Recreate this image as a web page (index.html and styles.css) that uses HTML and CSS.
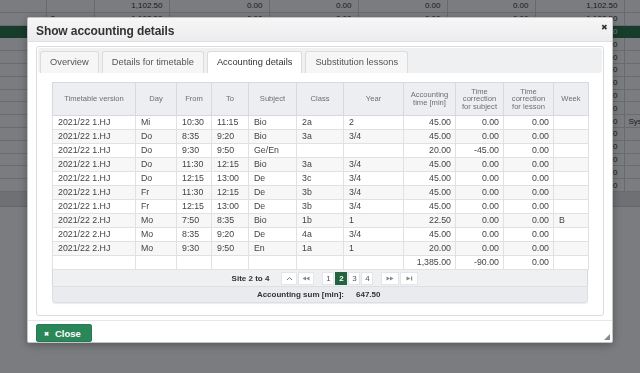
FILE: index.html
```html
<!DOCTYPE html>
<html lang="en">
<head>
    <meta charset="UTF-8">
    <meta name="viewport" content="width=device-width, initial-scale=1.0">
    <title>Show accounting details</title>
    <link rel="stylesheet" href="styles.css">
</head>
<body>

    <!-- page behind the dialog -->
    <div class="page">
        <table class="bg-table">
            <colgroup>
                <col style="width:46px"><col style="width:48px"><col style="width:75px"><col style="width:100px"><col style="width:89px">
                <col style="width:89px"><col style="width:88px"><col style="width:89px"><col style="width:16px">
            </colgroup>
            <tr><td></td><td></td><td>1,102.50</td><td>0.00</td><td>0.00</td><td>0.00</td><td>0.00</td><td>1,102.50</td><td></td></tr>
            <tr><td></td><td class="l">2</td><td>1,102.50</td><td>0.00</td><td>0.00</td><td>0.00</td><td>0.00</td><td>1,102.50</td><td></td></tr>
            <tr class="sel"><td></td><td></td><td></td><td></td><td></td><td></td><td></td><td>1,102.50</td><td></td></tr>
            <tr><td></td><td></td><td></td><td></td><td></td><td></td><td></td><td>1,102.50</td><td></td></tr>
            <tr><td></td><td></td><td></td><td></td><td></td><td></td><td></td><td>1,102.50</td><td></td></tr>
            <tr><td></td><td></td><td></td><td></td><td></td><td></td><td></td><td>1,102.50</td><td></td></tr>
            <tr><td></td><td></td><td></td><td></td><td></td><td></td><td></td><td>1,102.50</td><td></td></tr>
            <tr><td></td><td></td><td></td><td></td><td></td><td></td><td></td><td>1,102.50</td><td></td></tr>
            <tr><td></td><td></td><td></td><td></td><td></td><td></td><td></td><td>1,102.50</td><td></td></tr>
            <tr><td></td><td></td><td></td><td></td><td></td><td></td><td></td><td>1,102.50</td><td class="l">Sys</td></tr>
            <tr><td></td><td></td><td></td><td></td><td></td><td></td><td></td><td>1,102.50</td><td></td></tr>
            <tr><td></td><td></td><td></td><td></td><td></td><td></td><td></td><td>1,102.50</td><td></td></tr>
            <tr><td></td><td></td><td></td><td></td><td></td><td></td><td></td><td>1,102.50</td><td></td></tr>
            <tr><td></td><td></td><td></td><td></td><td></td><td></td><td></td><td>1,102.50</td><td></td></tr>
            <tr><td></td><td></td><td></td><td></td><td></td><td></td><td></td><td>1,102.50</td><td></td></tr>
        </table>
        <div class="bg-footer"></div>
    </div>

    <div class="overlay"></div>

    <div class="modal">
        <div class="modal-head">
            <h2>Show accounting details</h2>
            <span class="modal-x">&#10006;</span>
        </div>

        <div class="modal-body">
            <div class="tabs">
                <ul class="tab-bar">
                    <li>Overview</li>
                    <li>Details for timetable</li>
                    <li class="active">Accounting details</li>
                    <li>Substitution lessons</li>
                </ul>

                <div class="tab-panel">
                    <div class="grid-wrap">
                        <table class="grid">
                            <colgroup>
                                <col style="width:83px"><col style="width:41px"><col style="width:35px"><col style="width:37px">
                                <col style="width:48px"><col style="width:47px"><col style="width:60px"><col style="width:52px">
                                <col style="width:48px"><col style="width:50px"><col style="width:35px">
                            </colgroup>
                            <thead>
                                <tr>
                                    <th>Timetable version</th><th>Day</th><th>From</th><th>To</th><th>Subject</th><th>Class</th><th>Year</th>
                                    <th>Accounting<br>time [min]</th><th>Time<br>correction<br>for subject</th><th>Time<br>correction<br>for lesson</th><th>Week</th>
                                </tr>
                            </thead>
                            <tbody>
                                <tr><td>2021/22 1.HJ</td><td>Mi</td><td>10:30</td><td>11:15</td><td>Bio</td><td>2a</td><td>2</td><td class="num">45.00</td><td class="num">0.00</td><td class="num">0.00</td><td></td></tr>
                                <tr><td>2021/22 1.HJ</td><td>Do</td><td>8:35</td><td>9:20</td><td>Bio</td><td>3a</td><td>3/4</td><td class="num">45.00</td><td class="num">0.00</td><td class="num">0.00</td><td></td></tr>
                                <tr><td>2021/22 1.HJ</td><td>Do</td><td>9:30</td><td>9:50</td><td>Ge/En</td><td></td><td></td><td class="num">20.00</td><td class="num">-45.00</td><td class="num">0.00</td><td></td></tr>
                                <tr><td>2021/22 1.HJ</td><td>Do</td><td>11:30</td><td>12:15</td><td>Bio</td><td>3a</td><td>3/4</td><td class="num">45.00</td><td class="num">0.00</td><td class="num">0.00</td><td></td></tr>
                                <tr><td>2021/22 1.HJ</td><td>Do</td><td>12:15</td><td>13:00</td><td>De</td><td>3c</td><td>3/4</td><td class="num">45.00</td><td class="num">0.00</td><td class="num">0.00</td><td></td></tr>
                                <tr><td>2021/22 1.HJ</td><td>Fr</td><td>11:30</td><td>12:15</td><td>De</td><td>3b</td><td>3/4</td><td class="num">45.00</td><td class="num">0.00</td><td class="num">0.00</td><td></td></tr>
                                <tr><td>2021/22 1.HJ</td><td>Fr</td><td>12:15</td><td>13:00</td><td>De</td><td>3b</td><td>3/4</td><td class="num">45.00</td><td class="num">0.00</td><td class="num">0.00</td><td></td></tr>
                                <tr><td>2021/22 2.HJ</td><td>Mo</td><td>7:50</td><td>8:35</td><td>Bio</td><td>1b</td><td>1</td><td class="num">22.50</td><td class="num">0.00</td><td class="num">0.00</td><td>B</td></tr>
                                <tr><td>2021/22 2.HJ</td><td>Mo</td><td>8:35</td><td>9:20</td><td>De</td><td>4a</td><td>3/4</td><td class="num">45.00</td><td class="num">0.00</td><td class="num">0.00</td><td></td></tr>
                                <tr><td>2021/22 2.HJ</td><td>Mo</td><td>9:30</td><td>9:50</td><td>En</td><td>1a</td><td>1</td><td class="num">20.00</td><td class="num">0.00</td><td class="num">0.00</td><td></td></tr>
                                <tr><td></td><td></td><td></td><td></td><td></td><td></td><td></td><td class="num">1,385.00</td><td class="num">-90.00</td><td class="num">0.00</td><td></td></tr>
                            </tbody>
                        </table>

                        <div class="pager">
                            <span class="pager-info">Site 2 to 4</span>
                            <div class="pg-group">
                                <span class="pg"><svg width="7" height="5" viewBox="0 0 7 5"><polyline points="1,4 3.5,1.5 6,4" fill="none" stroke="#777" stroke-width="1"/></svg></span>
                                <span class="pg"><svg width="8" height="5" viewBox="0 0 8 5"><path d="M4 0.5 L0.5 2.5 L4 4.5 Z M7.5 0.5 L4 2.5 L7.5 4.5 Z" fill="#888"/></svg></span>
                            </div>
                            <div class="pg-group">
                                <span class="pg num-pg">1</span>
                                <span class="pg num-pg current">2</span>
                                <span class="pg num-pg">3</span>
                                <span class="pg num-pg">4</span>
                            </div>
                            <div class="pg-group">
                                <span class="pg wide"><svg width="8" height="5" viewBox="0 0 8 5"><path d="M0.5 0.5 L4 2.5 L0.5 4.5 Z M4 0.5 L7.5 2.5 L4 4.5 Z" fill="#888"/></svg></span>
                                <span class="pg wide"><svg width="7" height="5" viewBox="0 0 7 5"><path d="M0.5 0.5 L4.5 2.5 L0.5 4.5 Z" fill="#888"/><rect x="5" y="0.5" width="1.2" height="4" fill="#888"/></svg></span>
                            </div>
                        </div>

                        <div class="sum-row">
                            <span class="sum-label">Accounting sum [min]:</span>
                            <span class="sum-value">647.50</span>
                        </div>
                    </div>
                </div>
            </div>
        </div>

        <div class="modal-foot">
            <button class="close-btn"><span class="close-x">&#10006;</span>Close</button>
            <svg class="grip" width="6" height="6" viewBox="0 0 6 6"><path d="M6 0 L6 6 L0 6 Z" fill="#8a8a8a"/></svg>
        </div>
    </div>

</body>
</html>
```

FILE: styles.css
```css
body { margin: 0; width: 640px; height: 373px; overflow: hidden; background-color: #fff; font-family: "Liberation Sans", Arial, sans-serif; color: #333; }

/* background page */
.bg-table { border-collapse: collapse; table-layout: fixed; width: 640px; font-size: 8px; color: #333; }
.bg-table td { height: 11.8px; padding: 0 6px 0 4px; border-right: 1px solid #d8d8d8; border-bottom: 1px solid #dcdcdc; text-align: right; line-height: 11px; white-space: nowrap; overflow: hidden; }
.bg-table td.l { text-align: left; }
.bg-table tr.sel td { background-color: #2f7a50; color: #fff; border-color: #2f7a50; }
.bg-footer { height: 14px; background-color: #e6e6e8; border-bottom: 1px solid #d0d0d0; }
.overlay { position: fixed; top: 0; left: 0; right: 0; bottom: 0; background-color: rgba(2, 4, 10, 0.52); }

/* dialog */
.modal { position: absolute; left: 27px; top: 17px; width: 586px; height: 326px; box-sizing: border-box; background-color: #fff; border: 1px solid #c4c4c4; border-radius: 2px; box-shadow: 0 2px 8px rgba(0, 0, 0, 0.3); display: flex; flex-direction: column; }
.modal-head { height: 28px; padding: 2px 4px 0 8px; box-sizing: border-box; display: flex; align-items: center; justify-content: space-between; background: linear-gradient(#f6f6f7, #ececee); border-bottom: 1px solid #e0e0e2; }
.modal-head h2 { margin: 0; font-size: 12px; font-weight: bold; color: #333; letter-spacing: -0.1px; }
.modal-x { font-size: 8px; color: #333; margin-top: -6px; }
.modal-body { flex-grow: 1; padding: 4px 8px 4px 8px; }

.tabs { border: 1px solid #dcdcdc; border-radius: 3px; padding: 1px; }
.tab-bar { list-style: none; margin: 0; padding: 3px 2px 0 2px; height: 22px; display: flex; gap: 3px; background-color: #eef0f2; border-radius: 3px; }
.tab-bar li { padding: 0 9px; height: 22px; line-height: 21px; box-sizing: border-box; border: 1px solid #dcdcdc; border-bottom: none; border-radius: 3px 3px 0 0; background-color: #f6f6f6; font-size: 9.3px; color: #555; }
.tab-bar li.active { background-color: #fff; color: #333; }
.tab-panel { padding: 9px 14px 11px 14px; }

/* grid */
.grid-wrap { width: 536px; border-radius: 0 0 3px 3px; box-shadow: 0 1px 1px rgba(0, 0, 0, 0.08); }
.grid { border-collapse: collapse; table-layout: fixed; width: 536px; }
.grid th { height: 32px; padding: 0 2px; background-color: #eceef1; border: 1px solid #d6d9dd; font-size: 7.6px; font-weight: normal; line-height: 7.6px; color: #6e6e6e; }
.grid td { height: 13px; padding: 0 4px 0 5px; border: 1px solid #e1e1e1; font-size: 8.8px; line-height: 13px; color: #444; white-space: nowrap; }
.grid tbody tr:nth-child(even) td { background-color: #f7f7f7; }
.grid td.num { text-align: right; }

.pager { height: 16px; display: flex; align-items: center; justify-content: center; gap: 8px; padding-left: 10px; background-color: #eef0f2; border-left: 1px solid #d6d9dd; border-right: 1px solid #d6d9dd; font-size: 8px; }
.pager-info { font-weight: bold; color: #333; margin-right: 4px; }
.pg-group { display: flex; gap: 1px; }
.pg { width: 16px; height: 13px; box-sizing: border-box; display: flex; align-items: center; justify-content: center; background-color: #fff; border: 1px solid #e3e5e8; color: #555; font-size: 8px; }
.pg.wide { width: 18px; }
.pg.num-pg { width: 12px; }
.pg.current { background-color: #21643f; border-color: #21643f; color: #fff; font-weight: bold; }

.sum-row { height: 15px; display: flex; align-items: center; background-color: #e9ebee; border: 1px solid #dcdfe3; border-radius: 0 0 3px 3px; font-size: 8px; font-weight: bold; color: #333; }
.sum-label { width: 291px; text-align: right; }
.sum-value { margin-left: 12px; }

/* footer */
.modal-foot { height: 25px; padding: 3px 8px 0 8px; box-sizing: border-box; border-top: 1px solid #e6e6e6; position: relative; }
.close-btn { width: 56px; height: 18px; padding: 0 0 0 7px; display: flex; align-items: center; gap: 6px; background-color: #2b8659; border: 1px solid #257a50; border-radius: 2px; color: #fff; font-family: "Liberation Sans", Arial, sans-serif; font-size: 9.5px; font-weight: bold; }
.close-x { font-size: 6px; }
.grip { position: absolute; right: 2px; bottom: 2px; }
```
